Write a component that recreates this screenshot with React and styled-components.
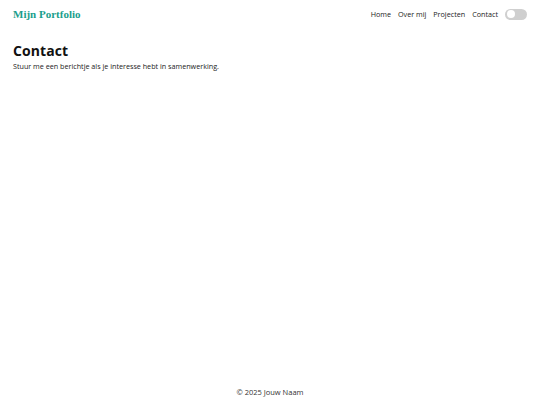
import React from 'react'
import styled, { createGlobalStyle } from 'styled-components'

const GlobalStyle = createGlobalStyle`
  * { box-sizing: border-box; }
  html, body { margin: 0; padding: 0; }
  body {
    background: #ffffff;
    color: #111111;
    font-family: "Open Sans", "Liberation Sans", sans-serif;
  }
`

const Page = styled.div`
  min-height: 100vh;
  display: flex;
  flex-direction: column;
`

const Header = styled.header`
  display: flex;
  align-items: center;
  justify-content: space-between;
  height: 28px;
  padding: 0 13px;
`

const Logo = styled.a`
  font-family: "Liberation Serif", "DejaVu Serif", serif;
  font-weight: 700;
  font-size: 11px;
  color: #1a9e8c;
  text-decoration: none;
`

const Nav = styled.nav`
  display: flex;
  align-items: center;
  gap: 7px;
`

const NavLink = styled.a`
  font-size: 7.2px;
  color: #222222;
  text-decoration: none;
`

const Toggle = styled.button`
  position: relative;
  width: 22px;
  height: 11px;
  padding: 0;
  border: none;
  border-radius: 6px;
  background: #cfcfcf;
  cursor: pointer;

  &::after {
    content: '';
    position: absolute;
    top: 1.5px;
    left: 1.5px;
    width: 8px;
    height: 8px;
    border-radius: 50%;
    background: #ffffff;
  }
`

const Main = styled.main`
  flex: 1;
  padding: 15px 13px;
`

const Title = styled.h1`
  margin: 0;
  font-size: 14px;
  font-weight: 700;
  line-height: 1.2;
  letter-spacing: 0.1px;
`

const Lead = styled.p`
  margin: 1px 0 0;
  font-size: 7.2px;
  color: #222222;
`

const Footer = styled.footer`
  padding: 8px 0 8px;
  text-align: center;
  font-size: 7.5px;
  color: #333333;
`

const App = () => {
  return (
    <>
      <GlobalStyle />
      <Page>
        <Header>
          <Logo href="#">Mijn Portfolio</Logo>
          <Nav>
            <NavLink href="#">Home</NavLink>
            <NavLink href="#">Over mij</NavLink>
            <NavLink href="#">Projecten</NavLink>
            <NavLink href="#">Contact</NavLink>
            <Toggle aria-label="Thema wisselen" />
          </Nav>
        </Header>
        <Main>
          <Title>Contact</Title>
          <Lead>Stuur me een berichtje als je interesse hebt in samenwerking.</Lead>
        </Main>
        <Footer>© 2025 Jouw Naam</Footer>
      </Page>
    </>
  )
}

export default App
